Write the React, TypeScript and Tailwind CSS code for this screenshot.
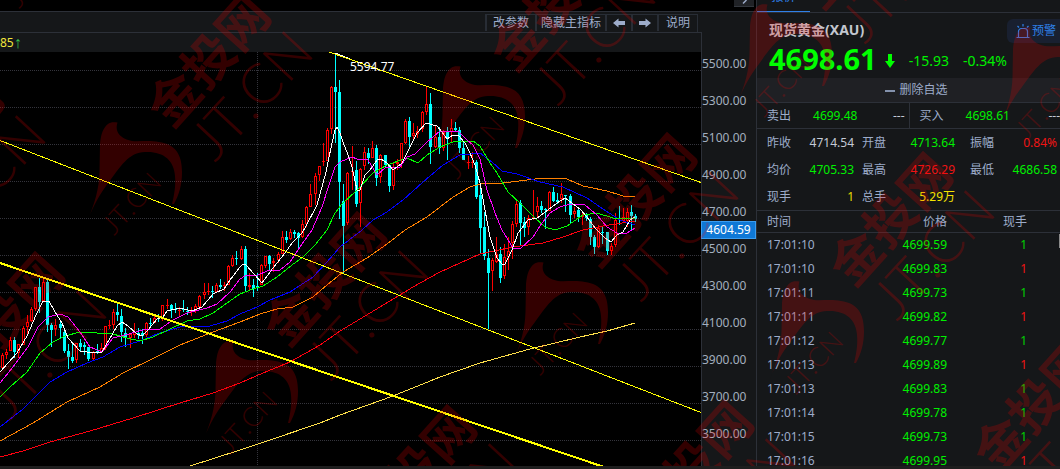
import React from "react";

type Candle = [x: number, high: number, top: number, bottom: number, low: number, up: 0 | 1];

const candles: Candle[] = [
  [2, 353, 355, 368, 369, 1], [6, 349, 352, 355, 359, 1], [10, 337, 340, 351, 351, 1], [14, 337, 340, 352, 358, 0],
  [18, 344, 344, 353, 358, 1], [23, 326, 328, 345, 345, 1], [27, 315, 322, 327, 335, 1], [31, 307, 309, 321, 322, 1],
  [35, 287, 287, 309, 311, 1], [39, 278, 287, 302, 313, 0], [43, 279, 282, 301, 301, 1], [47, 279, 282, 325, 332, 0],
  [51, 323, 325, 330, 347, 0], [55, 319, 325, 329, 336, 1], [60, 322, 324, 328, 339, 0], [64, 330, 332, 351, 353, 0],
  [68, 344, 351, 357, 369, 0], [72, 342, 357, 361, 363, 0], [76, 343, 343, 360, 363, 1], [80, 339, 343, 347, 351, 0],
  [84, 342, 345, 347, 355, 0], [88, 347, 347, 359, 361, 0], [93, 351, 352, 359, 360, 1], [97, 344, 351, 352, 354, 0],
  [101, 343, 348, 352, 352, 1], [105, 326, 326, 348, 350, 1], [109, 320, 325, 326, 329, 1], [113, 309, 312, 325, 329, 1],
  [117, 303, 312, 315, 321, 0], [121, 309, 316, 332, 342, 0], [125, 328, 333, 338, 347, 0], [130, 333, 334, 338, 348, 1],
  [134, 323, 332, 335, 338, 1], [138, 328, 333, 334, 339, 0], [142, 329, 333, 336, 344, 0], [146, 322, 323, 335, 337, 1],
  [150, 318, 323, 324, 328, 0], [154, 315, 318, 323, 323, 1], [158, 314, 318, 319, 322, 0], [162, 305, 305, 318, 321, 1],
  [167, 299, 305, 306, 309, 1], [171, 304, 305, 310, 318, 0], [175, 303, 309, 310, 313, 0], [179, 307, 310, 311, 316, 1],
  [183, 300, 309, 310, 312, 0], [187, 307, 311, 312, 315, 0], [191, 307, 310, 312, 316, 1], [195, 304, 306, 310, 313, 1],
  [199, 295, 296, 307, 309, 1], [204, 283, 292, 295, 299, 1], [208, 283, 291, 292, 295, 1], [212, 286, 291, 292, 298, 0],
  [216, 283, 285, 292, 293, 1], [220, 279, 285, 287, 289, 0], [224, 282, 285, 286, 291, 1], [228, 265, 266, 285, 285, 1],
  [232, 255, 258, 266, 267, 1], [236, 251, 258, 259, 265, 0], [241, 246, 249, 259, 260, 1], [245, 246, 249, 286, 291, 0],
  [249, 273, 285, 287, 291, 1], [253, 279, 285, 289, 297, 0], [257, 273, 286, 287, 291, 0], [261, 264, 265, 285, 285, 1],
  [265, 256, 256, 266, 268, 1], [269, 255, 256, 264, 270, 0], [273, 258, 261, 263, 272, 1], [278, 252, 254, 260, 263, 1],
  [282, 231, 237, 254, 254, 1], [286, 231, 237, 240, 243, 0], [290, 229, 232, 239, 240, 1], [294, 230, 232, 234, 238, 0],
  [298, 232, 233, 238, 248, 0], [302, 220, 224, 237, 238, 1], [306, 206, 207, 224, 227, 1], [310, 184, 194, 207, 207, 1],
  [315, 173, 176, 194, 205, 1], [319, 166, 166, 175, 181, 1], [323, 143, 161, 162, 166, 1], [327, 128, 130, 161, 161, 1],
  [331, 86, 87, 129, 134, 1], [335, 53, 87, 92, 143, 0], [339, 80, 92, 182, 219, 0], [343, 184, 201, 226, 273, 0],
  [347, 172, 173, 223, 225, 1], [352, 146, 171, 172, 190, 1], [356, 161, 170, 204, 207, 0], [360, 168, 169, 203, 227, 1],
  [364, 147, 152, 166, 170, 1], [368, 148, 153, 158, 164, 0], [372, 141, 148, 158, 158, 1], [376, 145, 148, 178, 186, 0],
  [380, 154, 155, 177, 183, 1], [385, 155, 155, 165, 168, 0], [389, 165, 165, 186, 192, 0], [393, 162, 167, 186, 190, 1],
  [397, 159, 162, 164, 170, 1], [401, 143, 143, 160, 168, 1], [405, 119, 121, 143, 144, 1], [409, 117, 121, 137, 148, 0],
  [413, 123, 133, 136, 139, 1], [417, 126, 131, 134, 138, 1], [422, 111, 112, 129, 132, 1], [426, 87, 104, 112, 115, 1],
  [430, 93, 104, 147, 164, 0], [435, 125, 137, 147, 148, 1], [439, 127, 137, 148, 154, 0], [443, 130, 132, 148, 151, 1],
  [447, 127, 131, 138, 160, 0], [451, 119, 128, 132, 142, 1], [455, 122, 128, 130, 131, 0], [459, 127, 130, 148, 153, 0],
  [463, 142, 148, 160, 160, 0], [468, 156, 162, 163, 169, 1], [472, 152, 162, 163, 168, 1], [476, 160, 162, 197, 199, 0],
  [480, 188, 195, 228, 254, 0], [484, 212, 227, 256, 260, 0], [488, 249, 258, 273, 329, 0], [492, 258, 260, 271, 291, 1],
  [496, 237, 254, 262, 263, 1], [500, 247, 254, 278, 283, 0], [504, 244, 257, 276, 279, 1], [508, 237, 251, 257, 270, 1],
  [512, 221, 224, 243, 259, 1], [516, 200, 204, 224, 227, 1], [520, 200, 203, 223, 245, 0], [524, 217, 222, 228, 237, 0],
  [528, 215, 218, 227, 235, 1], [533, 190, 217, 218, 220, 1], [537, 197, 206, 212, 217, 1], [541, 201, 206, 210, 213, 0],
  [545, 208, 209, 210, 229, 0], [549, 191, 192, 211, 211, 1], [553, 187, 192, 201, 202, 0], [557, 193, 200, 202, 204, 0],
  [561, 183, 194, 199, 203, 1], [565, 195, 195, 196, 212, 0], [570, 194, 196, 215, 224, 0], [574, 207, 211, 214, 218, 1],
  [578, 207, 210, 217, 222, 0], [582, 213, 215, 217, 225, 1], [586, 213, 214, 218, 221, 0], [590, 217, 219, 237, 245, 0],
  [594, 235, 237, 247, 254, 0], [598, 225, 228, 247, 248, 1], [602, 227, 232, 233, 244, 0], [607, 232, 232, 251, 255, 0],
  [611, 243, 246, 251, 255, 1], [615, 213, 220, 245, 247, 1], [619, 206, 218, 219, 225, 0], [623, 208, 217, 221, 223, 1],
  [627, 208, 212, 221, 227, 1], [631, 205, 212, 216, 230, 0], [635, 214, 216, 219, 222, 0],
];

const averages = [
  { color: "#ffe04a", points: "190,466 240,450 267,441 320,423 340,415 393,396 440,377 480,363 530,349 580,337 607,331 635,323" },
  { color: "#ff0010", points: "0,457 23,451 50,442 90,431 133,418 180,403 213,393 240,383 263,373 290,362 320,345 340,331 380,307 413,287 440,272 480,254 513,247 543,243 563,237 583,230 603,226 635,221" },
  { color: "#ff8000", points: "0,441 33,423 67,402 100,387 123,373 150,360 180,345 213,332 240,322 260,314 277,309 293,307 313,297 327,285 343,272 367,258 387,244 405,230 427,217 453,197 470,187 480,184 503,183 543,178 567,179 583,186 607,191 623,196 635,197" },
  { color: "#0000ff", points: "0,427 23,409 50,382 67,372 87,363 103,357 120,347 140,341 157,334 180,327 210,326 227,321 240,314 257,307 270,300 290,292 313,277 327,262 340,247 362,230 373,220 387,212 403,200 423,182 443,165 460,155 480,153 492,162 502,171 517,174 540,182 563,187 587,198 603,209 620,220 635,225" },
  { color: "#00ff00", points: "0,397 10,387 27,372 40,353 53,342 65,336 80,332 113,334 127,338 140,341 153,337 170,329 187,321 200,319 213,313 227,303 240,294 253,289 263,286 277,277 292,265 303,257 315,245 327,230 335,213 342,204 357,190 373,173 387,165 407,158 418,163 427,155 440,147 453,142 473,141 480,146 490,163 497,173 508,192 522,205 535,218 545,227 555,230 567,226 583,215 597,213 613,218 635,219" },
  { color: "#ff00ff", points: "0,383 13,367 28,347 38,327 48,317 60,314 68,317 80,332 90,347 102,352 113,338 125,335 143,330 160,329 173,320 187,313 207,308 217,304 230,292 240,279 245,276 258,275 267,271 280,270 290,262 302,244 312,230 322,207 329,185 335,167 340,162 352,157 357,159 368,160 377,175 385,168 400,167 407,157 415,154 427,142 440,131 458,131 467,140 473,145 480,159 487,190 495,213 502,230 513,248 520,249 533,237 542,223 550,213 560,207 570,204 585,205 597,215 607,227 617,233 627,233 635,228" },
  { color: "#ffffff", points: "0,372 17,353 27,336 36,315 43,301 49,301 55,312 62,323 68,338 80,351 87,352 102,352 106,345 112,335 117,326 122,322 128,326 137,334 142,336 148,330 157,319 163,317 167,311 180,308 192,311 202,307 213,294 224,289 230,280 240,267 243,264 246,265 262,283 273,268 285,253 292,243 302,233 305,228 317,205 326,172 332,143 335,130 337,127 340,133 344,145 347,152 352,167 357,190 360,190 365,175 370,170 377,160 381,159 387,163 393,170 402,163 410,147 417,133 426,123 437,126 442,132 447,139 453,135 458,135 465,143 470,153 475,165 480,183 485,210 490,237 497,258 502,264 505,264 512,250 518,233 528,220 537,218 548,210 557,203 565,198 572,203 580,209 587,217 595,228 605,238 611,242 617,235 623,232 630,220 635,217" },
];

const gridRows = [70, 107, 144, 181, 218, 255, 292, 329, 366, 403, 440];
const axisPrices = ["5500.00", "5300.00", "5100.00", "4900.00", "4700.00", "4500.00", "4300.00", "4100.00", "3900.00", "3700.00", "3500.00"];

const watermarks = [
  [117, 122], [460, 66], [767, 4], [1030, 27], [233, 341], [543, 262], [799, 281],
  [-89, 381], [323, 534], [600, 529], [943, 467], [-150, 206], [22, -105],
];

const stats = [
  { label: "昨收", value: "4714.54", tone: "text-[#c4cad6]" },
  { label: "开盘", value: "4713.64", tone: "text-[#00f000]" },
  { label: "振幅", value: "0.84%", tone: "text-[#f01414]" },
  { label: "均价", value: "4705.33", tone: "text-[#00f000]" },
  { label: "最高", value: "4726.29", tone: "text-[#f01414]" },
  { label: "最低", value: "4686.58", tone: "text-[#00f000]" },
  { label: "现手", value: "1", tone: "text-[#e6dc00]" },
  { label: "总手", value: "5.29万", tone: "text-[#f5e400]" },
];

const trades = [
  { time: "17:01:10", price: "4699.59", up: false },
  { time: "17:01:10", price: "4699.83", up: true },
  { time: "17:01:11", price: "4699.73", up: false },
  { time: "17:01:11", price: "4699.82", up: true },
  { time: "17:01:12", price: "4699.77", up: false },
  { time: "17:01:13", price: "4699.89", up: true },
  { time: "17:01:13", price: "4699.83", up: false },
  { time: "17:01:14", price: "4699.78", up: false },
  { time: "17:01:15", price: "4699.73", up: false },
  { time: "17:01:16", price: "4699.95", up: true },
];

function Chart() {
  return (
    <svg className="block h-full w-full bg-black" viewBox="0 52 701 414" preserveAspectRatio="xMinYMin slice" shapeRendering="crispEdges" role="img" aria-label="XAU K线">
      <g stroke="#34343c" strokeDasharray="1 1">
        {gridRows.map((y) => (
          <line key={y} x1="0" x2="701" y1={y + 0.5} y2={y + 0.5} />
        ))}
        <line x1="257.5" x2="257.5" y1="52" y2="466" />
      </g>
      {candles.map(([x, high, top, bottom, low, up]) =>
        up ? (
          <g key={x} fill="#ff0000">
            <rect x={x} y={high} width="1" height={Math.max(top - high, 0)} />
            <rect x={x} y={bottom} width="1" height={Math.max(low - bottom, 0)} />
            <rect x={x - 1} y={top} width="3" height={bottom - top} />
            {bottom - top > 2 && <rect x={x} y={top + 1} width="1" height={bottom - top - 2} fill="#000000" />}
          </g>
        ) : (
          <g key={x} fill="#00ffff">
            <rect x={x} y={high} width="1" height={low - high} />
            <rect x={x - 1} y={top} width="3" height={bottom - top} />
          </g>
        ),
      )}
      <g fill="none">
        {averages.map((line) => (
          <polyline key={line.color} points={line.points} stroke={line.color} />
        ))}
        <path d="M335 53 L350 59" stroke="#ffffff" />
        <path d="M0 140.500 L701 412.500" stroke="#ffff00" />
        <path d="M329 52 L701 182.500" stroke="#ffff00" />
        <path d="M0 263 L604 467" stroke="#ffff00" strokeWidth="2" />
      </g>
      <text x="350" y="71" fill="#ffffff" className="font-['Noto_Sans',sans-serif] text-xs">5594.77</text>
    </svg>
  );
}

function Watermark() {
  return (
    <svg className="pointer-events-none absolute inset-0 h-full w-full" fill="#ff0000" opacity="0.2" aria-hidden="true">
      {watermarks.map(([x, y]) => (
        <g key={`${x},${y}`} transform={`translate(${x} ${y})`}>
          <path d="M0.500 0.500C-3 0-7 0-9 2C-14 6-16 12-17 22L-17.500 50C-18 67-22 80-29 98C-24 84-16 70-8 60C3 45 12 30 28 30C46 29 57 38 58 54C59 64 57 74 55 82H57C62 73 65 63 65 50C65 32 58 22 42 20C32 18 22 20 15 19C5 17-3 11 0.500 0.500Z" />
          <text transform="translate(92 -61) rotate(-48)" y="18" textAnchor="middle" className="font-['Noto_Sans_CJK_SC',sans-serif] text-[51px] font-bold">金投网</text>
          <text transform="translate(98 41) rotate(-47)" className="font-[Lato,sans-serif] text-[56px] font-light [font-kerning:none]">JT.CN</text>
          <text transform="translate(-3 114) rotate(-47)" className="font-[Lato,sans-serif] text-[27px] font-light [font-kerning:none]">JT.CN</text>
        </g>
      ))}
    </svg>
  );
}

function Arrow({ className }: { className?: string }) {
  return (
    <svg className={className} width="12" height="10" viewBox="0 0 12 10" fill="currentColor" aria-hidden="true">
      <path d="M0 5L5.500 0.500V3H12V7H5.500V9.500Z" />
    </svg>
  );
}

function AlarmIcon() {
  return (
    <svg width="14" height="15" viewBox="0 0 14 15" fill="none" stroke="currentColor" strokeWidth="1.200" aria-hidden="true">
      <path d="M0.500 13.500H13.500M2.500 13.500V7.500A3 3 0 0 1 5.500 4.500H8.500A3 3 0 0 1 11.500 7.500V13.500M7 0V2.500M1.500 2L3 3.500M12.500 2L11 3.500" />
    </svg>
  );
}

const toolButton = "flex h-4 items-center justify-center border-l-2 border-[#282d35]";

export default function App() {
  return (
    <div className="relative flex h-screen flex-col overflow-hidden bg-[#151719] font-['Noto_Sans','Noto_Sans_CJK_SC',sans-serif] text-xs text-[#9dacca]">
      <div className="flex min-h-0 flex-1">
        <main className="flex min-w-0 flex-1 flex-col">
          <div className="flex h-[11px] shrink-0 justify-end bg-black pr-[2px]">
            <button aria-label="展开" className="flex h-[7px] w-5 items-start justify-center overflow-hidden border-b border-[#33373d] bg-[#202226]">
              <svg width="8" height="5" viewBox="0 0 8 5" fill="none" stroke="#9dacca" strokeWidth="1.500" aria-hidden="true">
                <path d="M6.500 0L3 3.500" />
              </svg>
            </button>
          </div>
          <div className="flex h-[21px] shrink-0 items-end justify-end border-t border-[#2c3038] pr-[58px]">
            <div className="flex h-[18px] border-r border-t border-[#282d35] leading-4">
              <button className={`${toolButton} w-[50px]`}>改参数</button>
              <button className={`${toolButton} w-[70px]`}>隐藏主指标</button>
              <button aria-label="上一个" className={`${toolButton} w-[26px]`}><Arrow /></button>
              <button aria-label="下一个" className={`${toolButton} w-[26px]`}><Arrow className="rotate-180" /></button>
              <button className={`${toolButton} w-[40px]`}>说明</button>
            </div>
          </div>
          <div className="flex min-h-0 flex-1">
            <div className="flex min-w-0 flex-1 flex-col">
              <div className="flex h-5 shrink-0 items-center border-t border-[#2c3038] text-[#f2e63c]">
                85<span className="font-['Liberation_Sans',sans-serif] text-base text-[#35c04a]">↑</span>
              </div>
              <div className="min-h-0 flex-1">
                <Chart />
              </div>
            </div>
            <div className="relative w-[55px] shrink-0 border-l border-[#2c3038] pt-[13px] text-[#a3afbf]">
              {axisPrices.map((price) => (
                <div key={price} className="h-[37px] leading-[37px]">{price}</div>
              ))}
              <div className="absolute -left-px right-0 top-[189px] h-[18px] border border-[#3a9cf0] bg-[#0f78d6] text-center leading-4 text-white">4604.59</div>
            </div>
          </div>
        </main>

        <aside className="flex w-[304px] shrink-0 flex-col overflow-hidden border-l border-[#2c3038]">
          <nav className="flex h-[13px] shrink-0 items-end overflow-hidden border-b border-[#2c3038]">
            <a href="#quote" className="w-[53px] border-b border-[#2f80e8] pb-[6px] text-center leading-4 text-[#2f80e8]">报价</a>
          </nav>
          <div className="flex h-[65px] shrink-0 items-start justify-between pl-3">
            <div>
              <h1 className="pt-[6px] text-sm font-bold leading-[22px] text-[#c3c7cf]">现货黄金(XAU)</h1>
              <p className="flex items-center whitespace-nowrap text-sm leading-8 text-[#00f000]">
                <strong className="text-[29px] text-[#00ff00]">4698.61</strong>
                <svg className="ml-2 mt-1" width="10" height="14" viewBox="0 0 10 14" fill="#00ff00" aria-hidden="true">
                  <path d="M3 0H7V7H10L5 14L0 7H3Z" />
                </svg>
                <span className="ml-[14px] mt-1">-15.93</span>
                <span className="ml-[14px] mt-1">-0.34%</span>
              </p>
            </div>
            <button className="-ml-4 mt-[6px] flex h-6 shrink-0 items-center gap-[2px] whitespace-nowrap rounded-l-md bg-[#192030] pl-[9px] pr-1 text-[#2f80e8]">
              <AlarmIcon />
              预警
            </button>
          </div>
          <button className="h-6 shrink-0 bg-[#1f2024] pl-4 text-center">
            <span className="mr-1 inline-block h-0.5 w-[10px] bg-[#8492ad] align-middle" />
            删除自选
          </button>
          <div className="grid h-[27px] shrink-0 grid-cols-2 border-y border-[#2c3038]">
            <div className="flex items-center pl-[10px] pr-1">
              <span>卖出</span>
              <span className="ml-[22px] text-[#00f000]">4699.48</span>
              <span className="ml-auto text-[#c4cad6]">---</span>
            </div>
            <div className="flex items-center border-l border-[#2c3038] pl-[10px]">
              <span>买入</span>
              <span className="ml-[22px] text-[#00f000]">4698.61</span>
              <span className="ml-auto text-[#c4cad6]">---</span>
            </div>
          </div>
          <dl className="grid h-[81px] shrink-0 grid-cols-[95px_108px_87px] grid-rows-3 pl-[10px]">
            {stats.map((item) => (
              <div key={item.label} className="flex items-center justify-between nth-[3n+1]:pr-2 nth-[3n+2]:pr-[15px]">
                <dt>{item.label}</dt>
                <dd className={item.tone}>{item.value}</dd>
              </div>
            ))}
          </dl>
          <table className="w-full shrink-0 table-fixed border-t border-[#2c3038]">
            <thead>
              <tr className="h-[22px] border-b border-[#2c3038]">
                <th className="w-[90px] pl-[10px] text-left font-normal">时间</th>
                <th className="w-[100px] text-right font-normal">价格</th>
                <th className="w-20 text-right font-normal">现手</th>
                <th className="p-0" />
              </tr>
            </thead>
            <tbody>
              {trades.map((trade, index) => (
                <tr key={index} className="h-6">
                  <td className="pl-[10px]">{trade.time}</td>
                  <td className="text-right text-[#00f000]">{trade.price}</td>
                  <td className={trade.up ? "text-right text-[#f01414]" : "text-right text-[#00d000]"}>1</td>
                  <td />
                </tr>
              ))}
            </tbody>
          </table>
        </aside>
      </div>
      <div className="z-10 h-[3px] shrink-0 bg-[#1e1e1e]" />
      <div className="absolute right-0 top-[234px] h-[14px] w-px bg-[#8a8a8a]" />
      <Watermark />
    </div>
  );
}
